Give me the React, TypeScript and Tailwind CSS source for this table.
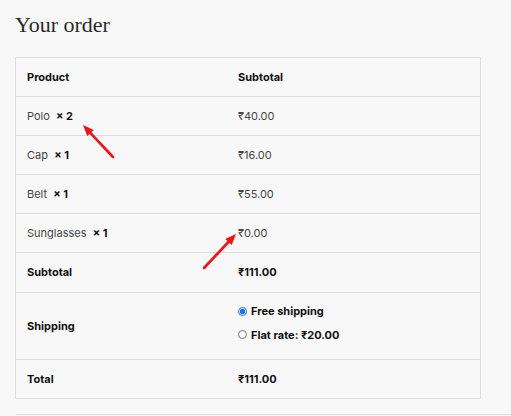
import React from "react";

const items = [
  { name: "Polo", qty: 2, price: "₹40.00" },
  { name: "Cap", qty: 1, price: "₹16.00" },
  { name: "Belt", qty: 1, price: "₹55.00" },
  { name: "Sunglasses", qty: 1, price: "₹0.00" },
];

function Row({
  left,
  right,
  className = "h-[39px]",
}: {
  left: React.ReactNode;
  right: React.ReactNode;
  className?: string;
}) {
  return (
    <div className={`grid grid-cols-[222px_1fr] items-center border-b border-[#dcdcdc] ${className}`}>
      <div className="pl-[11px]">{left}</div>
      <div>{right}</div>
    </div>
  );
}

function Arrow({ x1, y1, x2, y2 }: { x1: number; y1: number; x2: number; y2: number }) {
  const a = Math.atan2(y2 - y1, x2 - x1);
  const len = 11;
  const w = 4.5;
  const bx = x2 - len * Math.cos(a);
  const by = y2 - len * Math.sin(a);
  const px = -Math.sin(a) * w;
  const py = Math.cos(a) * w;
  return (
    <g>
      <line x1={x1} y1={y1} x2={bx} y2={by} stroke="#f01414" strokeWidth={2.6} strokeLinecap="round" />
      <polygon points={`${x2},${y2} ${bx + px},${by + py} ${bx - px},${by - py}`} fill="#f01414" />
    </g>
  );
}

export default function App() {
  return (
    <div className="relative h-[416px] w-[511px] overflow-hidden bg-[#f8f8f8] font-['Inter',sans-serif] text-[11px] text-[#333]">
      <h2 className="pl-[15px] pt-[11px] font-['Liberation_Serif',serif] text-[22px] leading-[28px] text-[#2a2a2a]">
        Your order
      </h2>

      <div className="ml-[15px] mt-[18px] w-[466px] border border-b-0 border-[#dcdcdc]">
        <Row
          className="h-[39px] font-bold text-[#111]"
          left="Product"
          right="Subtotal"
        />
        {items.map((it) => (
          <Row
            key={it.name}
            left={
              <span className="text-[#444]">
                {it.name}&nbsp; <strong className="font-bold text-[#111]">× {it.qty}</strong>
              </span>
            }
            right={<span className="text-[#444]">{it.price}</span>}
          />
        ))}
        <Row
          className="h-[40px] font-bold text-[#111]"
          left="Subtotal"
          right="₹111.00"
        />
        <Row
          className="h-[67px] font-bold text-[#111]"
          left="Shipping"
          right={
            <div className="flex flex-col gap-[7px] pb-[6px]">
              <label className="flex items-center gap-[4px]">
                <input type="radio" name="ship" defaultChecked className="m-0 h-[9px] w-[9px] accent-[#1a73e8]" />
                <span>Free shipping</span>
              </label>
              <label className="flex items-center gap-[4px]">
                <input type="radio" name="ship" className="m-0 h-[9px] w-[9px]" />
                <span>Flat rate: ₹20.00</span>
              </label>
            </div>
          }
        />
        <Row
          className="h-[39px] font-bold text-[#111]"
          left="Total"
          right="₹111.00"
        />
      </div>

      <div className="ml-[16px] mt-[15px] border-t border-[#dcdcdc]" />

      <svg className="pointer-events-none absolute left-0 top-0" width="511" height="416">
        <Arrow x1={113} y1={157} x2={83} y2={125} />
        <Arrow x1={204} y1={268} x2={236} y2={234} />
      </svg>
    </div>
  );
}
